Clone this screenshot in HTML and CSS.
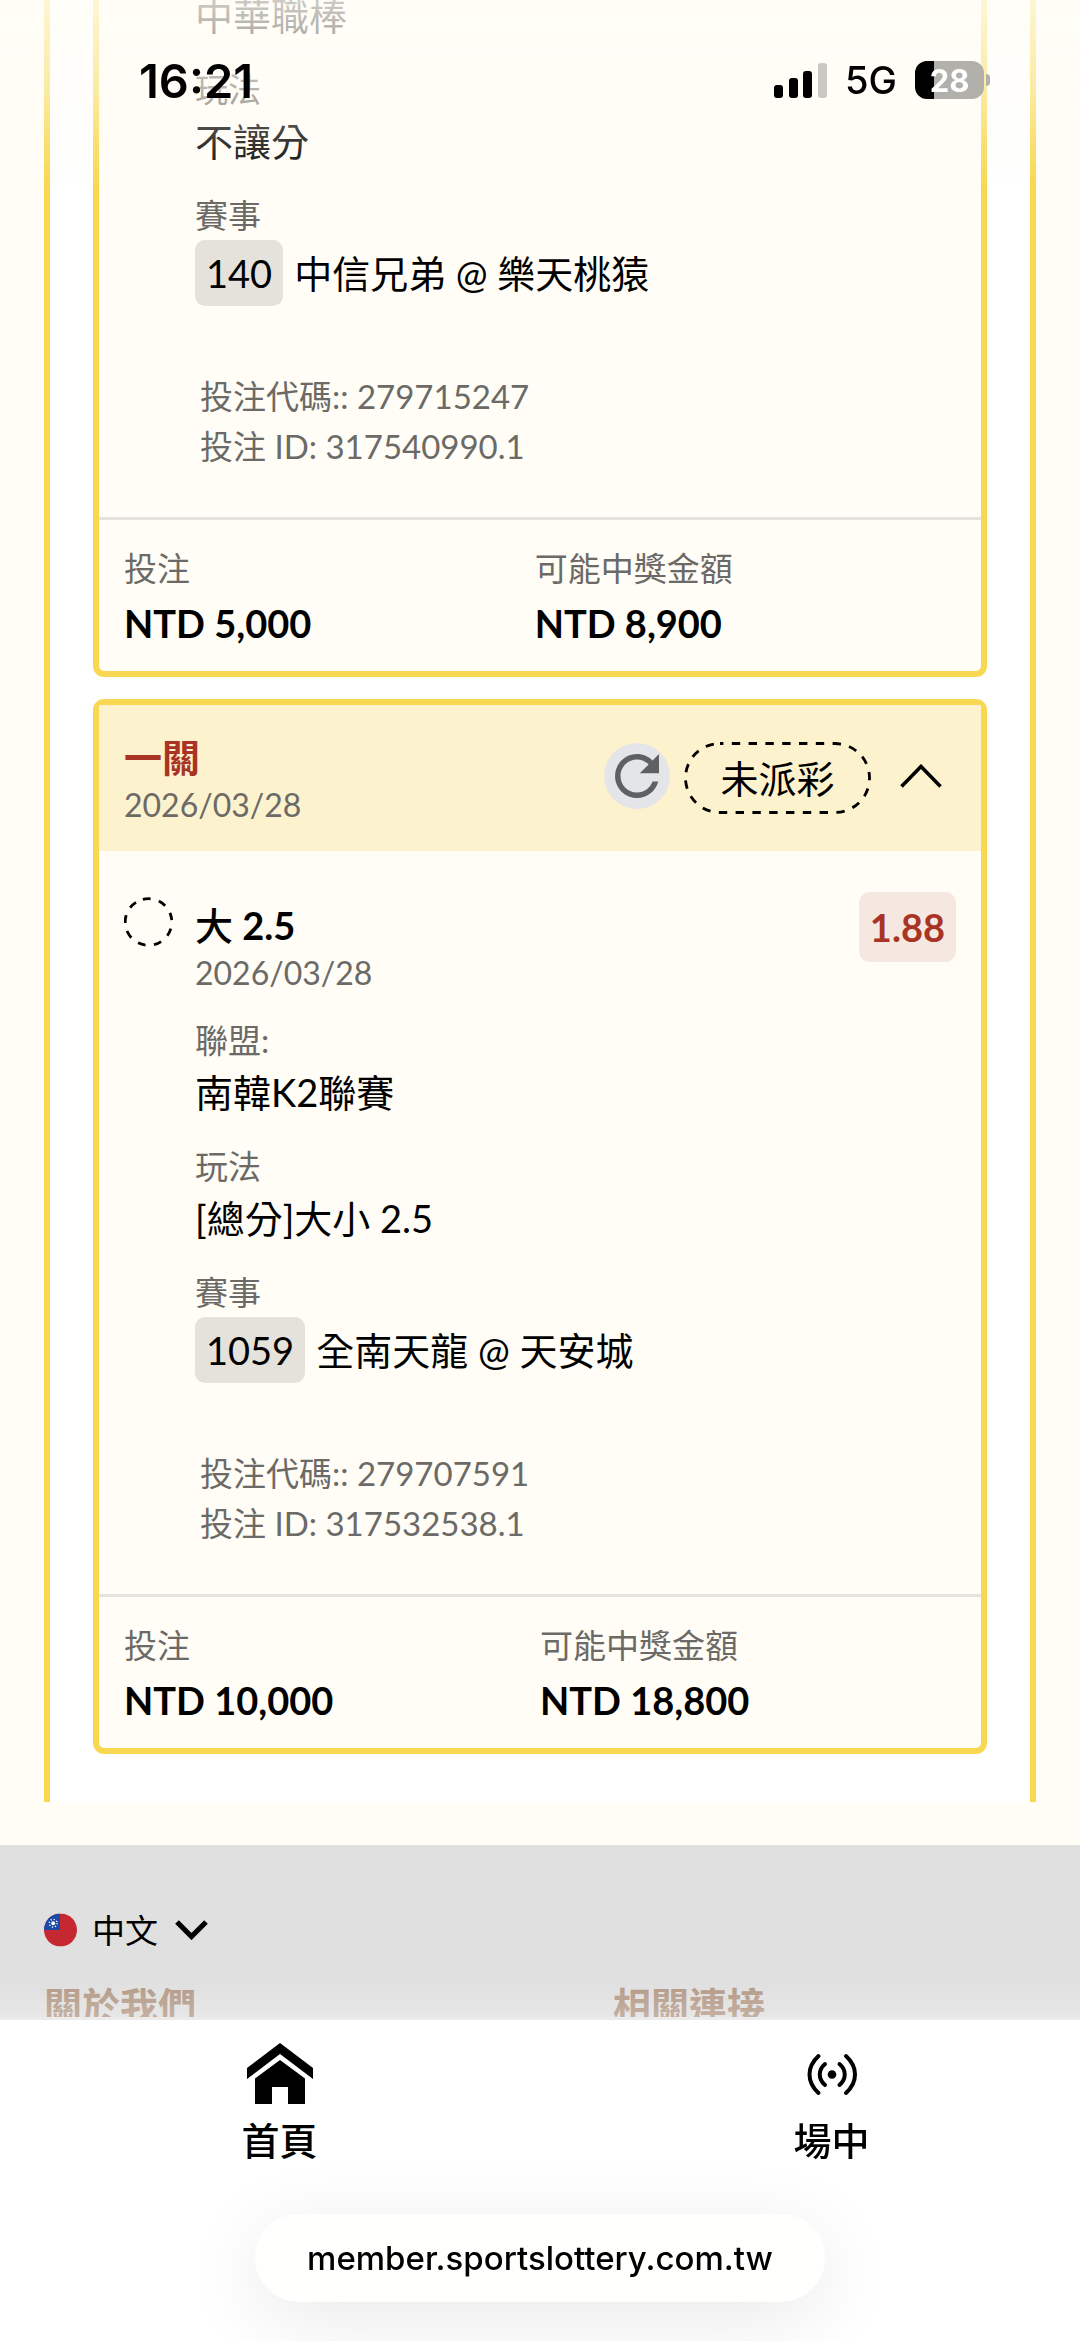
FILE: index.html
```html
<!DOCTYPE html>
<html lang="zh-Hant">
<head>
<meta charset="utf-8">
<meta name="viewport" content="width=device-width, initial-scale=1">
<title>投注紀錄</title>
<link rel="stylesheet" href="styles.css">
</head>
<body>
<header class="status">
  <time class="status-time">16:21</time>
  <div class="status-right">
    <svg class="signal" width="53" height="35" viewBox="0 0 53 35" aria-hidden="true">
      <rect x="0" y="22" width="9" height="13" rx="3"/>
      <rect x="15" y="15" width="9" height="20" rx="3"/>
      <rect x="29" y="8" width="9" height="27" rx="3"/>
      <rect x="44" y="0" width="9" height="35" rx="3" fill="#c9c8c3"/>
    </svg>
    <span class="network">5G</span>
    <span class="battery"><span class="battery-level">28</span></span>
  </div>
</header>

<main class="panel">
  <article class="card">
    <div class="bet">
      <span></span>
      <div class="bet-main">
        <dl class="fields">
          <div><dd>中華職棒</dd></div>
          <div><dt>玩法</dt><dd>不讓分</dd></div>
          <div><dt>賽事</dt><dd class="match"><span class="match-no">140</span>中信兄弟 @ 樂天桃猿</dd></div>
        </dl>
        <p class="codes">投注代碼:: 279715247<br>投注 ID: 317540990.1</p>
      </div>
    </div>
    <dl class="totals">
      <div><dt>投注</dt><dd>NTD 5,000</dd></div>
      <div><dt>可能中獎金額</dt><dd>NTD 8,900</dd></div>
    </dl>
  </article>

  <article class="card">
    <header class="card-head">
      <div class="card-title">
        <h2>一關</h2>
        <p class="date">2026/03/28</p>
      </div>
      <button class="refresh" type="button" aria-label="重新整理">
        <svg width="66" height="66" viewBox="0 0 24 24"><path fill="#5f6062" d="M17.65 6.35C16.2 4.9 14.21 4 12 4c-4.42 0-7.99 3.58-7.99 8s3.57 8 7.99 8c3.73 0 6.84-2.55 7.73-6h-2.08c-.82 2.33-3.04 4-5.65 4-3.31 0-6-2.69-6-6s2.69-6 6-6c1.66 0 3.14.69 4.22 1.78L13 11h7V4l-2.35 2.35z"/></svg>
      </button>
      <span class="pill">
        <svg class="pill-line" viewBox="0 0 187 72" preserveAspectRatio="none" aria-hidden="true"><rect x="1.5" y="1.5" width="184" height="69" rx="34.5" fill="none" stroke="#000" stroke-width="2.8" stroke-dasharray="8.4 8.4" stroke-dashoffset="5"/></svg>
        未派彩
      </span>
      <button class="toggle" type="button" aria-label="收合">
        <svg width="42" height="24" viewBox="0 0 42 24"><path d="M1.5 22.5 21 2.5l19.500 20" fill="none" stroke="#000" stroke-width="3.600"/></svg>
      </button>
    </header>
    <div class="bet">
      <svg class="state" width="49" height="50" viewBox="0 0 49 50" aria-hidden="true"><circle cx="24.500" cy="25" r="23.300" fill="none" stroke="#000" stroke-width="2.800" stroke-dasharray="7.800 8.466" transform="rotate(-104 24.500 25)"/></svg>
      <div class="bet-main">
        <div class="bet-title">
          <h3><span class="pick">大</span> 2.5</h3>
          <p class="date">2026/03/28</p>
        </div>
        <dl class="fields">
          <div><dt>聯盟:</dt><dd>南韓K2聯賽</dd></div>
          <div><dt>玩法</dt><dd>[總分]大小 2.5</dd></div>
          <div><dt>賽事</dt><dd class="match"><span class="match-no">1059</span>全南天龍 @ 天安城</dd></div>
        </dl>
        <p class="codes">投注代碼:: 279707591<br>投注 ID: 317532538.1</p>
      </div>
      <strong class="odds">1.88</strong>
    </div>
    <dl class="totals">
      <div><dt>投注</dt><dd>NTD 10,000</dd></div>
      <div><dt>可能中獎金額</dt><dd>NTD 18,800</dd></div>
    </dl>
  </article>
</main>

<footer class="footer">
  <div class="language">
    <svg width="33" height="34" viewBox="0 0 34 34" aria-hidden="true">
      <defs><clipPath id="round"><circle cx="17" cy="17" r="17"/></clipPath></defs>
      <g clip-path="url(#round)">
        <path fill="#c62832" d="M0 0h34v34H0z"/>
        <path fill="#1d4aa8" d="M0 0h16.500v17H0z"/>
        <circle cx="9.500" cy="10" r="4" fill="none" stroke="#fff" stroke-width="1.500" stroke-dasharray="1.200 1.942"/>
        <circle cx="9.500" cy="10" r="2" fill="#fff"/>
      </g>
    </svg>
    <select class="language-select" aria-label="語言"><option>中文</option></select>
    <svg width="33" height="20" viewBox="0 0 33 20" aria-hidden="true"><path d="M2 2l14.500 14.500L31 2" fill="none" stroke="#000" stroke-width="5.200"/></svg>
  </div>
  <div class="footer-columns">
    <h4>關於我們</h4>
    <h4>相關連接</h4>
  </div>
</footer>

<div class="dock">
  <nav class="tabs">
    <a class="tab" href="#home">
      <svg width="66" height="61" viewBox="0 0 66 61" aria-hidden="true"><path d="M33 0 66 25v11L33 11 0 36V25z"/><path d="M33 17 58 35.500V61H41V44H25v17H8V35.500z"/></svg>
      首頁
    </a>
    <a class="tab" href="#live">
      <svg width="50" height="61" viewBox="0 0 50 61" fill="none" stroke="#000" stroke-width="4" stroke-linecap="round" aria-hidden="true"><circle cx="25" cy="31.500" r="4.300" fill="#000" stroke="none"/><path d="M18 21c-7 6-7 15 0 21M32.500 21c7 6 7 15 0 21M11.500 13c-12 11-12 26 0 37M39 13c12 11 12 26 0 37"/></svg>
      場中
    </a>
  </nav>
  <button class="address" type="button">member.sportslottery.com.tw</button>
</div>
</body>
</html>
```
FILE: styles.css
```css
* {
  box-sizing: border-box;
}

body {
  margin: 0;
  min-height: 100vh;
  display: flex;
  flex-direction: column;
  background: #fffdf6;
  color: #000;
  font-family: Lato, "Noto Sans CJK TC", sans-serif;
  font-size: 38px;
  line-height: 55px;
}

h2, h3, h4, p, dl, dd {
  margin: 0;
  font-size: inherit;
}

button {
  padding: 0;
  border: 0;
  font: inherit;
  color: inherit;
}

svg {
  display: block;
  flex: none;
}

/* Status bar, over the scrolled content */
.status {
  position: fixed;
  z-index: 2;
  top: 0;
  left: 0;
  right: 0;
  height: 190px;
  padding: 52px 90px 0 139px;
  display: flex;
  justify-content: space-between;
  align-items: flex-start;
  background: linear-gradient(rgba(255, 253, 246, .8), rgba(255, 253, 246, .5) 47%, rgba(255, 253, 246, .22) 74%, rgba(255, 253, 246, 0));
  font-family: Inter, "Liberation Sans", sans-serif;
}

.status-time {
  font-size: 47px;
  font-weight: 600;
  line-height: 58px;
}

.status-right {
  display: flex;
  align-items: center;
  gap: 18px;
  height: 56px;
}

.network {
  font-size: 38px;
  font-weight: 500;
}

.battery {
  display: flex;
  align-items: center;
  gap: 2px;
}

.battery-level {
  width: 69px;
  height: 38px;
  border-radius: 12px;
  background: linear-gradient(90deg, #000 19px, #b1b0aa 19px);
  color: #fff;
  font-size: 31px;
  font-weight: 700;
  line-height: 39px;
  text-align: center;
}

.battery::after {
  content: "";
  width: 4px;
  height: 12px;
  border-radius: 0 6px 6px 0;
  background: #b1b0aa;
}

/* Bet list */
.panel {
  margin: -40px 44px 43px;
  padding: 0 43px 48px;
  display: flex;
  flex-direction: column;
  gap: 22px;
  border: solid #f8d850;
  border-width: 0 6px;
  background: #fff;
}

.card {
  border: 6px solid #f8d850;
  border-radius: 11px;
  background: #fffdf6;
}

.card-head {
  min-height: 146px;
  padding: 0 25px;
  display: flex;
  align-items: center;
  gap: 14px;
  background: #fdf2ce;
}

.card-title {
  flex: 1;
  padding-top: 4px;
}

.card-title h2,
.bet-title h3 {
  line-height: 50px;
  font-weight: 700;
}

.card-title h2 {
  color: #a93425;
}

.date {
  color: #6b6a66;
  font-size: 32px;
  line-height: 46px;
}

.refresh,
.toggle {
  margin-bottom: 4px;
}

.refresh {
  border-radius: 50%;
  background: #e4e5e8;
}

.pill {
  position: relative;
  width: 187px;
  line-height: 72px;
  text-align: center;
}

.pill-line {
  position: absolute;
  inset: 0;
  width: 100%;
  height: 100%;
}

.toggle {
  width: 71px;
  height: 66px;
  display: grid;
  place-items: center;
  background: none;
}

.bet {
  padding: 41px 25px 46px;
  display: grid;
  grid-template-columns: 49px 1fr auto;
  column-gap: 22px;
  align-items: start;
}

.card:first-child .bet {
  padding-top: 22px;
}

.state {
  margin-top: 5px;
}

.bet-title {
  padding: 8px 0 20px;
}

.pick {
  font-weight: 500;
}

.fields {
  display: grid;
  gap: 22px;
}

dt,
.codes {
  color: #6b6a66;
  font-size: 33px;
  line-height: 49px;
}

.match {
  display: flex;
  align-items: center;
  gap: 11px;
  line-height: 66px;
}

.match-no {
  padding: 0 11px;
  border-radius: 10px;
  background: #e5e2dc;
}

.codes {
  padding: 65px 0 0 5px;
  line-height: 50px;
}

.odds {
  padding: 0 11px;
  border-radius: 11px;
  background: #f5e8e0;
  color: #a93425;
  line-height: 70px;
}

.totals {
  padding: 24px 25px 18px;
  display: flex;
  border-top: 3px solid #e5e3de;
}

.totals div {
  flex: 1 1 auto;
}

.totals dd {
  font-weight: 700;
  line-height: 60px;
}

/* Footer */
.footer {
  flex: 1;
  padding: 60px 44px 0;
  background: #e0e0e0;
}

.language {
  height: 50px;
  margin-bottom: 25px;
  display: flex;
  align-items: center;
  gap: 15px;
}

.language-select {
  width: 68px;
  padding: 0;
  border: 0;
  appearance: none;
  background: none;
  color: #000;
  font: inherit;
  font-size: 33px;
}

.footer-columns {
  display: grid;
  grid-template-columns: 1fr 1fr;
  gap: 146px;
}

.footer-columns h4 {
  color: #b39986;
  line-height: 50px;
}

/* Bottom bar */
.dock {
  position: fixed;
  z-index: 1;
  left: 0;
  right: 0;
  bottom: 0;
  padding: 23px 0 39px;
  display: flex;
  flex-direction: column;
  align-items: center;
  gap: 49px;
  border-top: 3px solid #e5e5e5;
  background: #fff;
}

.dock::before {
  content: "";
  position: absolute;
  left: 0;
  right: 0;
  bottom: 100%;
  height: 40px;
  background: linear-gradient(rgba(255, 255, 255, 0), rgba(255, 255, 255, .25));
}

.tabs {
  width: 100%;
  display: grid;
  grid-template-columns: 9fr 8fr;
  gap: 24px;
}

.tab {
  display: flex;
  flex-direction: column;
  align-items: center;
  gap: 11px;
  color: #000;
  font-weight: 500;
  line-height: 50px;
  text-decoration: none;
}

.address {
  width: 570px;
  max-width: 90%;
  height: 88px;
  border-radius: 44px;
  background: #fffffd;
  box-shadow: 0 16px 80px rgba(0, 0, 0, .09);
  font-family: Inter, "Liberation Sans", sans-serif;
  font-size: 33px;
  font-weight: 500;
}
```
